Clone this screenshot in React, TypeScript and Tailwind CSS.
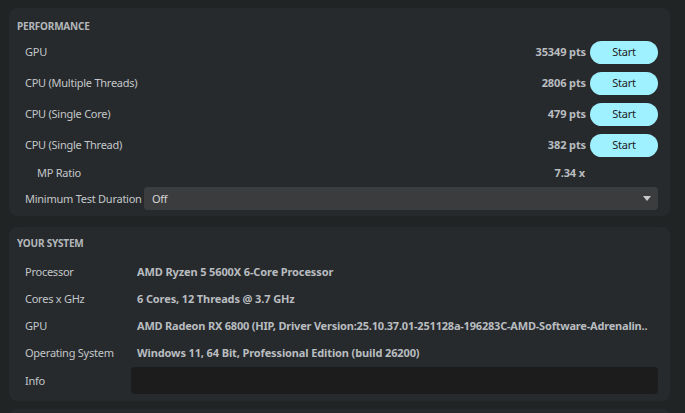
import React from "react";

const perfRows = [
  { label: "GPU", value: "35349 pts" },
  { label: "CPU (Multiple Threads)", value: "2806 pts" },
  { label: "CPU (Single Core)", value: "479 pts" },
  { label: "CPU (Single Thread)", value: "382 pts" },
];

const sysRows = [
  { label: "Processor", value: "AMD Ryzen 5 5600X 6-Core Processor", tight: false },
  { label: "Cores x GHz", value: "6 Cores, 12 Threads @ 3.7 GHz", tight: false },
  {
    label: "GPU",
    value: "AMD Radeon RX 6800 (HIP, Driver Version:25.10.37.01-251128a-196283C-AMD-Software-Adrenalin..",
    tight: true,
  },
  { label: "Operating System", value: "Windows 11, 64 Bit, Professional Edition (build 26200)", tight: false },
];

export default function App() {
  return (
    <div
      className="w-[685px] h-[413px] overflow-hidden bg-[#202425] pt-[8px] pl-[9px] text-[11px] text-[#c3c7ca] tracking-[-0.25px]"
      style={{ fontFamily: '"Noto Sans", "Open Sans", sans-serif' }}
    >
      <div className="w-[661px] rounded-[8px] bg-[#272a2c] pt-[11px] pb-[6px] pr-[12px]">
        <div className="pl-[8px] h-[14px] leading-[14px] text-[10px] font-bold text-[#b3b8bb] tracking-[-0.2px]">
          PERFORMANCE
        </div>
        <div className="mt-[7px] flex flex-col gap-[8px] pl-[16px]">
          {perfRows.map((r) => (
            <div key={r.label} className="flex items-center h-[23px] pt-[1px]">
              <div className="flex-1">{r.label}</div>
              <div className="font-bold text-[#b9bdc0] mr-[4px] tracking-[-0.12px]">{r.value}</div>
              <button className="w-[68px] h-[23px] rounded-full bg-[#a0f1ff] text-[#1d2224] text-[11px]">
                Start
              </button>
            </div>
          ))}
        </div>
        <div className="mt-[5px] flex items-center h-[23px] pl-[28px] pt-[1px]">
          <div className="flex-1">MP Ratio</div>
          <div className="font-bold text-[#b9bdc0] mr-[73px] tracking-[-0.12px]">7.34 x</div>
        </div>
        <div className="mt-[3px] flex items-center h-[23px] pl-[16px]">
          <div className="w-[119px] whitespace-nowrap pt-[1px]">Minimum Test Duration</div>
          <div className="flex-1 h-[23px] rounded-[4px] bg-[#3b3c3d] flex items-center pl-[8px] pr-[7px]">
            <span className="flex-1 text-[#d4d6d8] pt-[1px]">Off</span>
            <svg width="8" height="5" viewBox="0 0 8 5">
              <path d="M0 0 L8 0 L4 5 Z" fill="#c8cacc" />
            </svg>
          </div>
        </div>
      </div>

      <div className="mt-[11px] w-[661px] rounded-[8px] bg-[#272a2c] pt-[9px] pb-[7px] pr-[12px]">
        <div className="pl-[8px] h-[14px] leading-[14px] text-[10px] font-bold text-[#b3b8bb] tracking-[-0.2px]">
          YOUR SYSTEM
        </div>
        <div className="mt-[8px] pl-[16px] flex flex-col">
          {sysRows.map((r) => (
            <div key={r.label} className="flex items-center h-[27px] pt-[1px]">
              <div className="w-[106px] shrink-0">{r.label}</div>
              <div
                className={
                  r.tight
                    ? "flex-1 min-w-0 pl-[6px] font-bold text-[#b9bdc0] whitespace-nowrap tracking-[-0.2px]"
                    : "flex-1 min-w-0 pl-[6px] font-bold text-[#b9bdc0] whitespace-nowrap tracking-[-0.12px]"
                }
              >
                {r.value}
              </div>
            </div>
          ))}
          <div className="flex items-center h-[27px] mt-[1px]">
            <div className="w-[106px] shrink-0 pt-[1px]">Info</div>
            <div className="flex-1 h-[27px] rounded-[4px] bg-[#1c1c1c]" />
          </div>
        </div>
      </div>

      <div className="mt-[8px] w-[661px] h-[40px] rounded-[8px] bg-[#272a2c]" />
    </div>
  );
}
